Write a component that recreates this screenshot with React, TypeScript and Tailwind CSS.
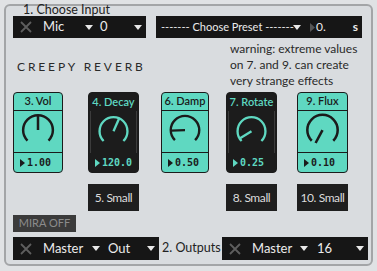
import React from "react";

const TEAL = "#5fd8c1";

const Tri = ({ color = "#e8e8e8" }: { color?: string }) => (
  <svg width="8" height="5" viewBox="0 0 8 5" className="shrink-0">
    <path d="M0 0h8L4 5z" fill={color} />
  </svg>
);

const XIcon = () => (
  <svg width="12" height="12" viewBox="0 0 12 12" className="shrink-0">
    <path d="M1 1L11 11M11 1L1 11" stroke="#5e5e5e" strokeWidth="1.8" />
  </svg>
);

// knob drawn as a 270° arc with a pointer; angle in degrees from top, clockwise
const Knob = ({ angle, color }: { angle: number; color: string }) => {
  const cx = 25;
  const cy = 19;
  const r = 15.5;
  const pt = (a: number, rr: number) => {
    const rad = (a * Math.PI) / 180;
    return [cx + rr * Math.sin(rad), cy - rr * Math.cos(rad)];
  };
  const [sx, sy] = pt(-135, r);
  const [ex, ey] = pt(135, r);
  const [px, py] = pt(angle, 15);
  return (
    <svg width="50" height="41" viewBox="0 0 50 41">
      <path
        d={`M${sx} ${sy} A${r} ${r} 0 1 1 ${ex} ${ey}`}
        fill="none"
        stroke={color}
        strokeWidth="2.6"
      />
      <line x1={cx} y1={cy} x2={px} y2={py} stroke={color} strokeWidth="2.6" />
    </svg>
  );
};

type Dial = { label: string; value: string; angle: number; dark: boolean };

const DialBox = ({ d }: { d: Dial }) => {
  const fg = d.dark ? TEAL : "#1b1b1b";
  return (
    <div
      className={`flex h-[81px] w-full flex-col overflow-hidden rounded-[4px] border border-[#1b1b1b] ${
        d.dark ? "bg-[#1c1c1c]" : "bg-[#5fd8c1]"
      }`}
    >
      <div
        className={`flex h-[18px] items-center justify-center whitespace-nowrap text-[11px] font-semibold ${
          d.dark ? "text-[#5fd8c1]" : "border-b border-[#1b1b1b] text-[#1b1b1b]"
        }`}
      >
        {d.label}
      </div>
      <div
        className={`flex h-[42px] items-center justify-center ${
          d.dark ? "mx-[1px] border-x border-[#3c3c3c]" : "border-b border-[#1b1b1b]"
        }`}
      >
        <Knob angle={d.angle} color={fg} />
      </div>
      <div className="flex h-[19px] items-center pl-[6px]">
        <svg width="5" height="8" viewBox="0 0 5 8" className="shrink-0">
          <path d="M0 0L5 4L0 8z" fill={fg} />
        </svg>
        <span
          className={`ml-[2px] text-[10px] font-bold ${d.dark ? "text-[#5fd8c1]" : "text-[#1b1b1b]"}`}
          style={{ fontFamily: "'DejaVu Sans Mono', monospace" }}
        >
          {d.value}
        </span>
      </div>
    </div>
  );
};

const SmallBtn = ({ label }: { label: string }) => (
  <div className="mt-[11px] flex h-[27px] w-full items-center justify-center whitespace-nowrap bg-[#1e1e1e] text-[12px] tracking-[-0.4px] text-[#dcdcdc]">
    {label}
  </div>
);

export default function App() {
  const dials: Dial[] = [
    { label: "3. Vol", value: "1.00", angle: 0, dark: false },
    { label: "4. Decay", value: "120.0", angle: 24, dark: true },
    { label: "6. Damp", value: "0.50", angle: -92, dark: false },
    { label: "7. Rotate", value: "0.25", angle: -122, dark: true },
    { label: "9. Flux", value: "0.10", angle: -152, dark: false },
  ];

  return (
    <div
      className="h-[271px] w-[377px] bg-[#e0e2e4] p-[4px] text-[#1e1e1e]"
      style={{ fontFamily: "Lato, 'Liberation Sans', sans-serif" }}
    >
      <div className="relative h-[262px] w-[369px] rounded-[6px] border-2 border-[#a3a5a7] bg-[#d9dcdf] pl-[7px] pt-[10px]">
        <span className="absolute left-[17px] top-[-3px] text-[12.5px] leading-[13px] text-[#222]">
          1. Choose Input
        </span>

        {/* input + preset row */}
        <div className="flex h-[22px] gap-[10px]">
          <div className="flex w-[133px] items-center bg-[#161616] pl-[7px] text-[13px] text-[#ececec]">
            <XIcon />
            <span className="ml-[11px] w-[42px]">Mic</span>
            <Tri />
            <span className="ml-[7px] w-[34px]">0</span>
            <Tri />
          </div>
          <div className="flex w-[206px] items-center bg-[#161616] pl-[5px] pr-[4px] text-[11px] text-[#ececec]">
            <span className="w-[132px] whitespace-nowrap">------- Choose Preset -------</span>
            <Tri />
            <svg width="5" height="9" viewBox="0 0 5 9" className="ml-[9px] shrink-0">
              <path d="M0 0L5 4.5L0 9z" fill="#555" />
            </svg>
            <span className="ml-[1px] text-[12px]">0.</span>
            <span className="ml-auto text-[12px] font-bold">s</span>
          </div>
        </div>

        {/* title + warning */}
        <div className="mt-[3px] flex">
          <div className="w-[217px] whitespace-nowrap pl-[4px] pt-[19px] text-[12px] leading-[14px] tracking-[0.24em] text-[#2a2a2a]">
            CREEPY REVERB
          </div>
          <div className="whitespace-nowrap text-[12px] leading-[16px] text-[#2a2a2a]">
            warning: extreme values
            <br />
            on 7. and 9. can create
            <br />
            very strange effects
          </div>
        </div>

        {/* dials */}
        <div className="mt-[3px] flex items-start">
          <div className="w-[50px]">
            <DialBox d={dials[0]} />
          </div>
          <div className="ml-[25px] w-[51px]">
            <DialBox d={dials[1]} />
            <SmallBtn label="5. Small" />
          </div>
          <div className="ml-[22px] w-[48px]">
            <DialBox d={dials[2]} />
          </div>
          <div className="ml-[17px] w-[51px]">
            <DialBox d={dials[3]} />
            <SmallBtn label="8. Small" />
          </div>
          <div className="ml-[20px] w-[51px]">
            <DialBox d={dials[4]} />
            <SmallBtn label="10. Small" />
          </div>
        </div>

        <div className="mt-[4px] flex h-[17px] w-[63px] items-center justify-center bg-[#3b3b3b] text-[11px] text-[#8c8c8c]">
          MIRA OFF
        </div>

        {/* outputs */}
        <div className="mt-[5px] flex h-[23px] items-center">
          <div className="flex h-full w-[146px] items-center bg-[#161616] pl-[7px] text-[13px] text-[#ececec]">
            <XIcon />
            <span className="ml-[11px] w-[49px]">Master</span>
            <Tri />
            <span className="ml-[8px] w-[39px]">Out</span>
            <Tri />
          </div>
          <span className="ml-[3px] w-[60px] whitespace-nowrap text-[12.5px] text-[#222]">2. Outputs</span>
          <div className="flex h-full w-[146px] items-center bg-[#161616] pl-[7px] text-[13px] text-[#ececec]">
            <XIcon />
            <span className="ml-[11px] w-[48px]">Master</span>
            <Tri />
            <span className="ml-[9px] w-[39px]">16</span>
            <Tri />
          </div>
        </div>
      </div>
    </div>
  );
}
